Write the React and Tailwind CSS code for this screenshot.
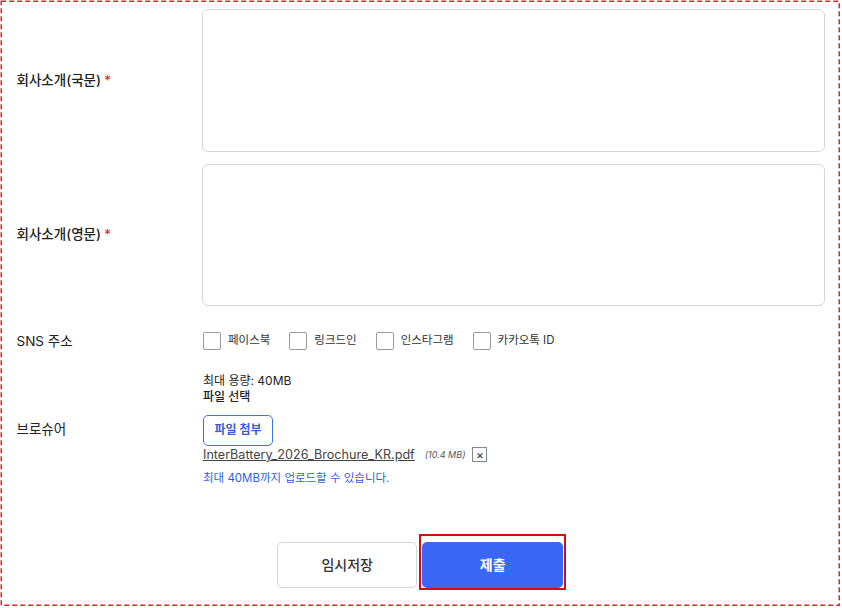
import React from "react";

const font = { fontFamily: 'Inter, "Noto Sans CJK KR", "Noto Sans", sans-serif' };

function Label({ children, required }) {
  return (
    <div className={"w-[200.5px] shrink-0 pl-[15px] text-[13.5px] text-[#222] flex items-center " + (required ? "font-medium" : "font-normal")}>
      <span>{children}</span>
      {required && <span className="ml-[3px] text-[#e0262b]">*</span>}
    </div>
  );
}

function Check({ label }) {
  return (
    <label className="flex items-center gap-[7px] text-[11.5px] text-[#333]">
      <span className="box-border w-[18px] h-[18px] border border-[#9a9a9a] rounded-[2px] bg-white" />
      <span>{label}</span>
    </label>
  );
}

export default function App() {
  return (
    <div style={font} className="bg-white w-[842px] h-[608px]">
      <div className="relative box-border w-[841px] h-[607px] pt-[8.5px] pl-[1.5px] pr-[16px]">
        <svg className="absolute left-0 top-0 pointer-events-none" width="841" height="607">
          <rect x="1.25" y="1.25" width="838" height="604" fill="none" stroke="#dc2428" strokeWidth="1.5" strokeDasharray="5 3" />
        </svg>
        <div className="flex">
          <Label required>회사소개(국문)</Label>
          <div className="flex-1 h-[143px] border border-[#d6d6d6] rounded-[6px]" />
        </div>
        <div className="flex mt-[12px]">
          <Label required>회사소개(영문)</Label>
          <div className="flex-1 h-[142px] border border-[#d6d6d6] rounded-[6px]" />
        </div>
        <div className="flex mt-[25px] items-center">
          <Label>SNS 주소</Label>
          <div className="flex items-center gap-[19px] pl-[1px]">
            <Check label="페이스북" />
            <Check label="링크드인" />
            <Check label="인스타그램" />
            <Check label="카카오톡 ID" />
          </div>
        </div>
        <div className="flex mt-[22px]">
          <Label>브로슈어</Label>
          <div className="flex flex-col items-start pl-[1px] text-[12px] leading-[16px] text-[#222]">
            <div>최대 용량: 40MB</div>
            <div className="font-medium">파일 선택</div>
            <button className="mt-[10px] h-[31px] w-[70px] border border-[#3b6ff5] rounded-[5px] text-[#3b5fd0] text-[12px] font-semibold bg-white">
              파일 첨부
            </button>
            <div className="flex items-center mt-[1px]">
              <span className="underline text-[12.6px] text-[#444]">InterBattery_2026_Brochure_KR.pdf</span>
              <span className="ml-[10px] italic text-[9px] text-[#555]">(10.4 MB)</span>
              <span className="box-border ml-[7px] w-[15px] h-[15px] border border-[#888] flex items-center justify-center text-[12px] leading-none text-[#333]">×</span>
            </div>
            <div className="mt-[7px] text-[11.5px] text-[#2f5fe0]">최대 40MB까지 업로드할 수 있습니다.</div>
          </div>
        </div>
        <div className="flex justify-center gap-[5px] mt-[56px] pl-[14px]">
          <button className="w-[140px] h-[46px] border border-[#d6d6d6] rounded-[5px] bg-white text-[14px] font-medium text-[#333]">
            임시저장
          </button>
          <div className="relative">
            <button className="w-[141px] h-[46px] rounded-[5px] bg-[#3b66f6] text-white text-[14px] font-bold">
              제출
            </button>
            <span className="absolute -top-[8px] -left-[3px] -right-[3px] -bottom-[2px] border-2 border-[#cc1111] pointer-events-none" />
          </div>
        </div>
      </div>
    </div>
  );
}
